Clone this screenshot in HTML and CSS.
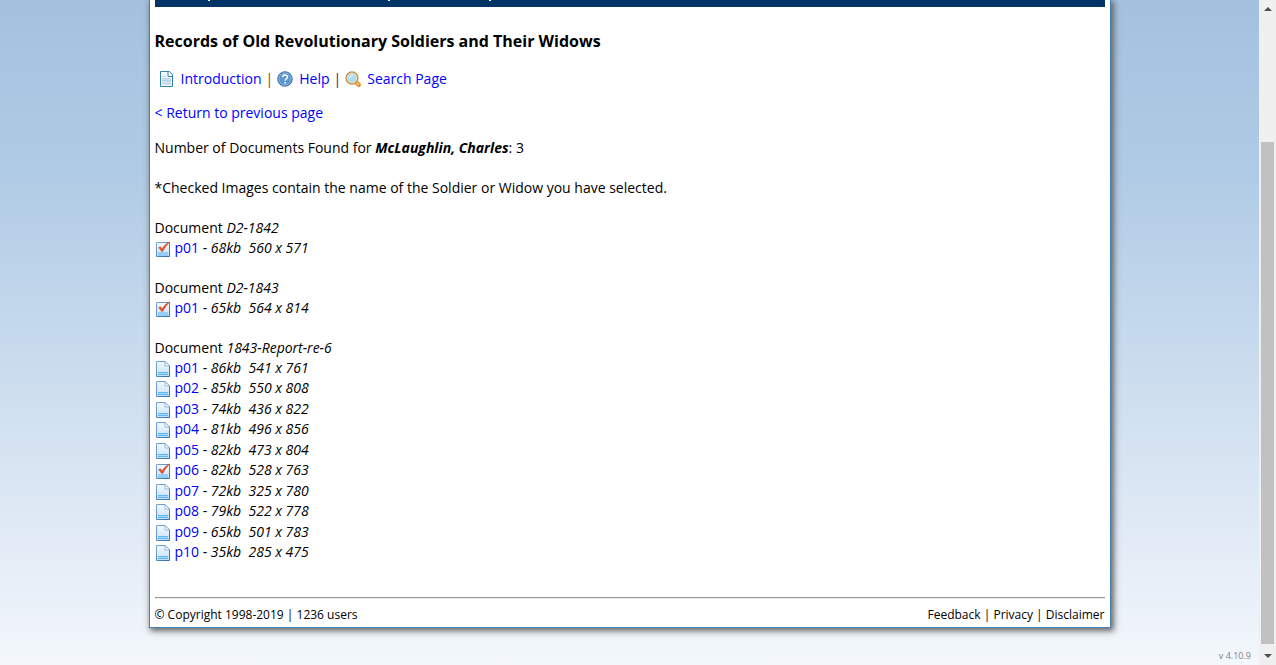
FILE: index.html
```html
<!DOCTYPE html>
<html lang="en">
<head>
    <meta charset="UTF-8">
    <meta name="viewport" content="width=device-width, initial-scale=1.0">
    <title>Records of Old Revolutionary Soldiers and Their Widows</title>
    <link rel="stylesheet" href="styles.css">
</head>
<body>
    <!-- Icons used in the document lists -->
    <svg class="sprite" aria-hidden="true">
        <defs>
            <linearGradient id="paper" x1="0" y1="0" x2="0" y2="1">
                <stop offset="0" stop-color="#f4faff"/>
                <stop offset="1" stop-color="#c4e0f8"/>
            </linearGradient>
            <linearGradient id="edge" x1="0" y1="0" x2="1" y2="1">
                <stop offset="0" stop-color="#7da7d6"/>
                <stop offset="1" stop-color="#2f6cb0"/>
            </linearGradient>
        </defs>
        <symbol id="page" viewBox="0 0 16 16">
            <path d="M1.5.5H10L14.500 5v10.500h-13z" fill="url(#paper)" stroke="url(#edge)"/>
            <path d="M10 .5V5h4.500z" fill="#fff" stroke="#7da7d6" stroke-width=".8"/>
            <path d="M3 11.500h10M3 13.500h10" stroke="#5cb6f2"/>
            <path d="M3 12.500h10" stroke="#a5dafa"/>
        </symbol>
        <symbol id="checked" viewBox="0 0 16 16">
            <path d="M1.500 1.500h13v14h-13z" fill="url(#paper)" stroke="url(#edge)"/>
            <path d="M3 12h10M3 14h10" stroke="#5cb6f2"/>
            <path d="M3.500 6.500l2-.8 1.700 2C9 4.500 11.500 2.200 15 .8 12 3.800 10 6.500 7.800 10.500H6.600z" fill="#e5532d" stroke="#d0502f" stroke-width=".4"/>
        </symbol>
    </svg>

    <div class="container">
        <div class="menu-bar"></div>

        <main>
            <h1>Records of Old Revolutionary Soldiers and Their Widows</h1>

            <nav class="links">
                <a href="#">
                    <svg class="icon" viewBox="0 0 16 16">
                        <path d="M1.500.5h9l3 3v12h-12z" fill="#f5fbfe" stroke="#3183ad"/>
                        <path d="M3 8h9v6H3z" fill="#cbe0ea"/>
                        <path d="M3 5.500h4M3 7.500h9M3 9.500h9" stroke="#b5d2e0"/>
                        <path d="M9 1v4.500h4" fill="#fff" stroke="#3183ad"/>
                    </svg>
                    <span>Introduction</span>
                </a>
                <span class="bar brown">|</span>
                <a href="#">
                    <svg class="icon" viewBox="0 0 16 16">
                        <circle cx="8" cy="8" r="7.300" fill="#3c78b8" stroke="#2b62a1" stroke-width=".8"/>
                        <circle cx="8" cy="8" r="6.200" fill="#5c96cf" stroke="#a5c8e8" stroke-width=".8"/>
                        <path d="M5.700 6.200C5.700 3.400 10.500 3.300 10.500 6c0 1.700-2.300 1.800-2.300 3.700" fill="none" stroke="#fff" stroke-width="1.500"/>
                        <path d="M7.400 11h1.600v1.600H7.400z" fill="#fff"/>
                    </svg>
                    <span>Help</span>
                </a>
                <span class="bar">|</span>
                <a href="#">
                    <svg class="icon" viewBox="0 0 16 16">
                        <path d="M11.300 11.500l2.500 2.300" stroke="#d98427" stroke-width="4" stroke-linecap="round"/>
                        <path d="M11.500 11.500l2 1.900" stroke="#ffc65a" stroke-width="2" stroke-linecap="round"/>
                        <circle cx="7" cy="7" r="5.900" fill="#a9ddf7" stroke="#c99040" stroke-width="1.500"/>
                        <circle cx="7" cy="7" r="4.800" fill="none" stroke="#f5dfb0"/>
                        <path d="M4 8c0-3 2-4 5-4-2 1-3 2-5 4z" fill="#e8f8ff"/>
                    </svg>
                    <span>Search Page</span>
                </a>
            </nav>

            <p class="return"><a href="#">&lt; Return to previous page</a></p>

            <p>Number of Documents Found for <b><i>McLaughlin, Charles</i></b>: 3</p>
            <p>*Checked Images contain the name of the Soldier or Widow you have selected.</p>

            <section>
                <h2>Document <i>D2-1842</i></h2>
                <ul>
                    <li><svg class="icon"><use href="#checked"/></svg><a href="#">p01</a> - <i>68kb&nbsp; 560 x 571</i></li>
                </ul>
            </section>

            <section>
                <h2>Document <i>D2-1843</i></h2>
                <ul>
                    <li><svg class="icon"><use href="#checked"/></svg><a href="#">p01</a> - <i>65kb&nbsp; 564 x 814</i></li>
                </ul>
            </section>

            <section>
                <h2>Document <i>1843-Report-re-6</i></h2>
                <ul class="long">
                    <li><svg class="icon"><use href="#page"/></svg><a href="#">p01</a> - <i>86kb&nbsp; 541 x 761</i></li>
                    <li><svg class="icon"><use href="#page"/></svg><a href="#">p02</a> - <i>85kb&nbsp; 550 x 808</i></li>
                    <li><svg class="icon"><use href="#page"/></svg><a href="#">p03</a> - <i>74kb&nbsp; 436 x 822</i></li>
                    <li><svg class="icon"><use href="#page"/></svg><a href="#">p04</a> - <i>81kb&nbsp; 496 x 856</i></li>
                    <li><svg class="icon"><use href="#page"/></svg><a href="#">p05</a> - <i>82kb&nbsp; 473 x 804</i></li>
                    <li><svg class="icon"><use href="#checked"/></svg><a href="#">p06</a> - <i>82kb&nbsp; 528 x 763</i></li>
                    <li><svg class="icon"><use href="#page"/></svg><a href="#">p07</a> - <i>72kb&nbsp; 325 x 780</i></li>
                    <li><svg class="icon"><use href="#page"/></svg><a href="#">p08</a> - <i>79kb&nbsp; 522 x 778</i></li>
                    <li><svg class="icon"><use href="#page"/></svg><a href="#">p09</a> - <i>65kb&nbsp; 501 x 783</i></li>
                    <li><svg class="icon"><use href="#page"/></svg><a href="#">p10</a> - <i>35kb&nbsp; 285 x 475</i></li>
                </ul>
            </section>
        </main>

        <hr>
        <footer>
            <span>© Copyright 1998-2019 | 1236 users</span>
            <span><a href="#">Feedback</a> | <a href="#">Privacy</a> | <a href="#">Disclaimer</a></span>
        </footer>
    </div>

    <div class="version">v 4.10.9</div>

    <!-- Scroll bar -->
    <div class="scrollbar" aria-hidden="true">
        <svg class="arrow" viewBox="0 0 17 17"><path d="M5 11l4-4 4 4z" fill="#505050"/></svg>
        <div class="track"><div class="thumb"></div></div>
        <svg class="arrow" viewBox="0 0 17 17"><path d="M5 6l4 4 4-4z" fill="#505050"/></svg>
    </div>
</body>
</html>
```
FILE: styles.css
```css
/* General Page Styling */
* {
    box-sizing: border-box;
}

body {
    margin: 0;
    padding: 0 17px 0 0;
    min-height: 100vh;
    background: linear-gradient(#a3c1df, #b0cbe5 26%, #e8eff8 88%, #f4f8fc) no-repeat;
    font-family: "Segoe UI", "Open Sans", sans-serif;
    font-size: 14px;
    line-height: 20px;
    color: #000;
}

a {
    color: #00f;
    text-decoration: none;
}

.sprite {
    position: absolute;
    width: 0;
    height: 0;
}

.icon {
    width: 16px;
    height: 16px;
    flex: none;
}

/* White panel */
.container {
    max-width: 962px;
    margin: 0 auto;
    padding: 0 5px;
    background-color: #fff;
    border: 1px solid #4682b4;
    border-top: none;
    box-shadow: 2px 2px 6px 1px #666;
}

/* Bottom edge of the menu, with the tails of its labels */
.menu-bar {
    height: 7px;
    background:
        linear-gradient(#fff, #fff) 53px 0 / 2px 1px no-repeat,
        linear-gradient(#fff, #fff) 233px 0 / 2px 1px no-repeat,
        linear-gradient(#fff, #fff) 334px 0 / 2px 1px no-repeat,
        #036;
}

h1 {
    margin: 24px 0 18px;
    font-size: 16px;
    line-height: 20px;
}

p {
    margin: 0 0 20px;
}

/* Top links */
.links {
    display: flex;
    align-items: center;
    gap: 4px;
    padding-left: 4px;
    margin-bottom: 14px;
}

.links a {
    display: flex;
    align-items: center;
    gap: 6px;
}

.bar {
    color: #036;
}

.brown {
    color: #840;
}

.return {
    margin-bottom: 15px;
}

/* Document lists */
section {
    margin-bottom: 20px;
}

h2 {
    margin: 0;
    font-size: inherit;
    font-weight: normal;
}

ul {
    margin: 0;
    padding: 0;
    list-style: none;
}

.long {
    display: flex;
    flex-direction: column;
    justify-content: space-between;
    min-height: 204px;
}

li {
    height: 20px;
}

li .icon {
    margin-right: 4px;
    vertical-align: -4px;
}

/* Footer */
hr {
    height: 2px;
    margin: 35px 0 6px;
    border: none;
    border-top: 1px solid #999;
    border-bottom: 1px solid #eee;
}

footer {
    display: flex;
    justify-content: space-between;
    padding-bottom: 2px;
    font-size: 12px;
}

footer a {
    color: #000;
}

.version {
    padding: 20px 8px 0 0;
    font-size: 9px;
    line-height: 16px;
    text-align: right;
    color: #808080;
}

/* Scroll bar */
.scrollbar {
    position: fixed;
    top: 0;
    right: 0;
    bottom: 0;
    width: 17px;
    display: flex;
    flex-direction: column;
    background-color: #f0f0f0;
}

.arrow {
    width: 17px;
    height: 17px;
}

.track {
    flex: 1;
    display: flex;
    flex-direction: column;
    justify-content: flex-end;
    padding: 0 2px 4px;
}

.thumb {
    height: 80%;
    background-color: #c1c1c1;
}
```
